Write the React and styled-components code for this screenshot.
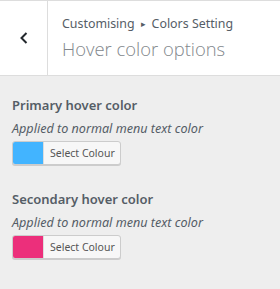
import React from 'react';
import styled, { createGlobalStyle } from 'styled-components';

const GlobalStyle = createGlobalStyle`
  html, body {
    margin: 0;
    padding: 0;
    background: #eeeeee;
    font-family: "Noto Sans", "Open Sans", sans-serif;
    color: #555d66;
  }
`;

const Panel = styled.div`
  width: 280px;
  height: 289px;
  background: #eeeeee;
  overflow: hidden;
`;

const Header = styled.header`
  display: flex;
  background: #fff;
  border-top: 1px solid #dddddd;
  border-bottom: 1px solid #dddddd;
  height: 74px;
`;

const BackButton = styled.button`
  width: 48px;
  flex: none;
  display: flex;
  align-items: center;
  justify-content: center;
  background: #fff;
  border: none;
  border-right: 1px solid #dddddd;
  padding: 0 0 0 1px;
  color: #23282d;
  cursor: pointer;
`;

const TitleBlock = styled.div`
  padding: 13px 0 0 14px;
`;

const Crumb = styled.div`
  font-size: 12.4px;
  line-height: 20px;
  color: #555d66;
`;

const Arrow = styled.span`
  font-size: 9px;
  margin: 0 6px;
  vertical-align: 1px;
`;

const Title = styled.h1`
  margin: 3px 0 0;
  font-family: "Open Sans", "Noto Sans", sans-serif;
  font-size: 18.4px;
  font-weight: 300;
  line-height: 24px;
  color: #82878c;
`;

const Body = styled.div`
  padding: 19px 12px 0;
  display: flex;
  flex-direction: column;
  gap: 24px;
`;

const Control = styled.div`
  display: flex;
  flex-direction: column;
  align-items: flex-start;
`;

const Label = styled.div`
  font-size: 13px;
  font-weight: 600;
  line-height: 20px;
  color: #555d66;
`;

const Desc = styled.div`
  font-size: 12.6px;
  font-style: italic;
  line-height: 18px;
  margin-top: 5px;
  color: #555d66;
`;

const ColorButton = styled.button`
  display: flex;
  align-items: stretch;
  margin-top: 3px;
  height: 24px;
  padding: 0;
  border: 1px solid #cccccc;
  border-radius: 3px;
  background: #f7f7f7;
  box-shadow: 0 1px 0 #cccccc;
  overflow: hidden;
  cursor: pointer;
  font-family: inherit;
`;

const Swatch = styled.span`
  width: 30px;
  background: ${(p) => p.color};
`;

const ButtonText = styled.span`
  display: flex;
  align-items: center;
  padding: 0 5px 0 6px;
  border-left: 1px solid #dddddd;
  font-size: 10.5px;
  color: #555555;
`;

function ColorControl({ label, color }) {
  return (
    <Control>
      <Label>{label}</Label>
      <Desc>Applied to normal menu text color</Desc>
      <ColorButton>
        <Swatch color={color} />
        <ButtonText>Select Colour</ButtonText>
      </ColorButton>
    </Control>
  );
}

export default function App() {
  return (
    <Panel>
      <GlobalStyle />
      <Header>
        <BackButton aria-label="Back">
          <svg width="10" height="14" viewBox="0 0 10 14">
            <path d="M7.5 2 L2.5 7 L7.5 12" fill="none" stroke="currentColor" strokeWidth="2" />
          </svg>
        </BackButton>
        <TitleBlock>
          <Crumb>
            Customising<Arrow>▸</Arrow>Colors Setting
          </Crumb>
          <Title>Hover color options</Title>
        </TitleBlock>
      </Header>
      <Body>
        <ColorControl label="Primary hover color" color="#42b4ff" />
        <ColorControl label="Secondary hover color" color="#ec2f7b" />
      </Body>
    </Panel>
  );
}
